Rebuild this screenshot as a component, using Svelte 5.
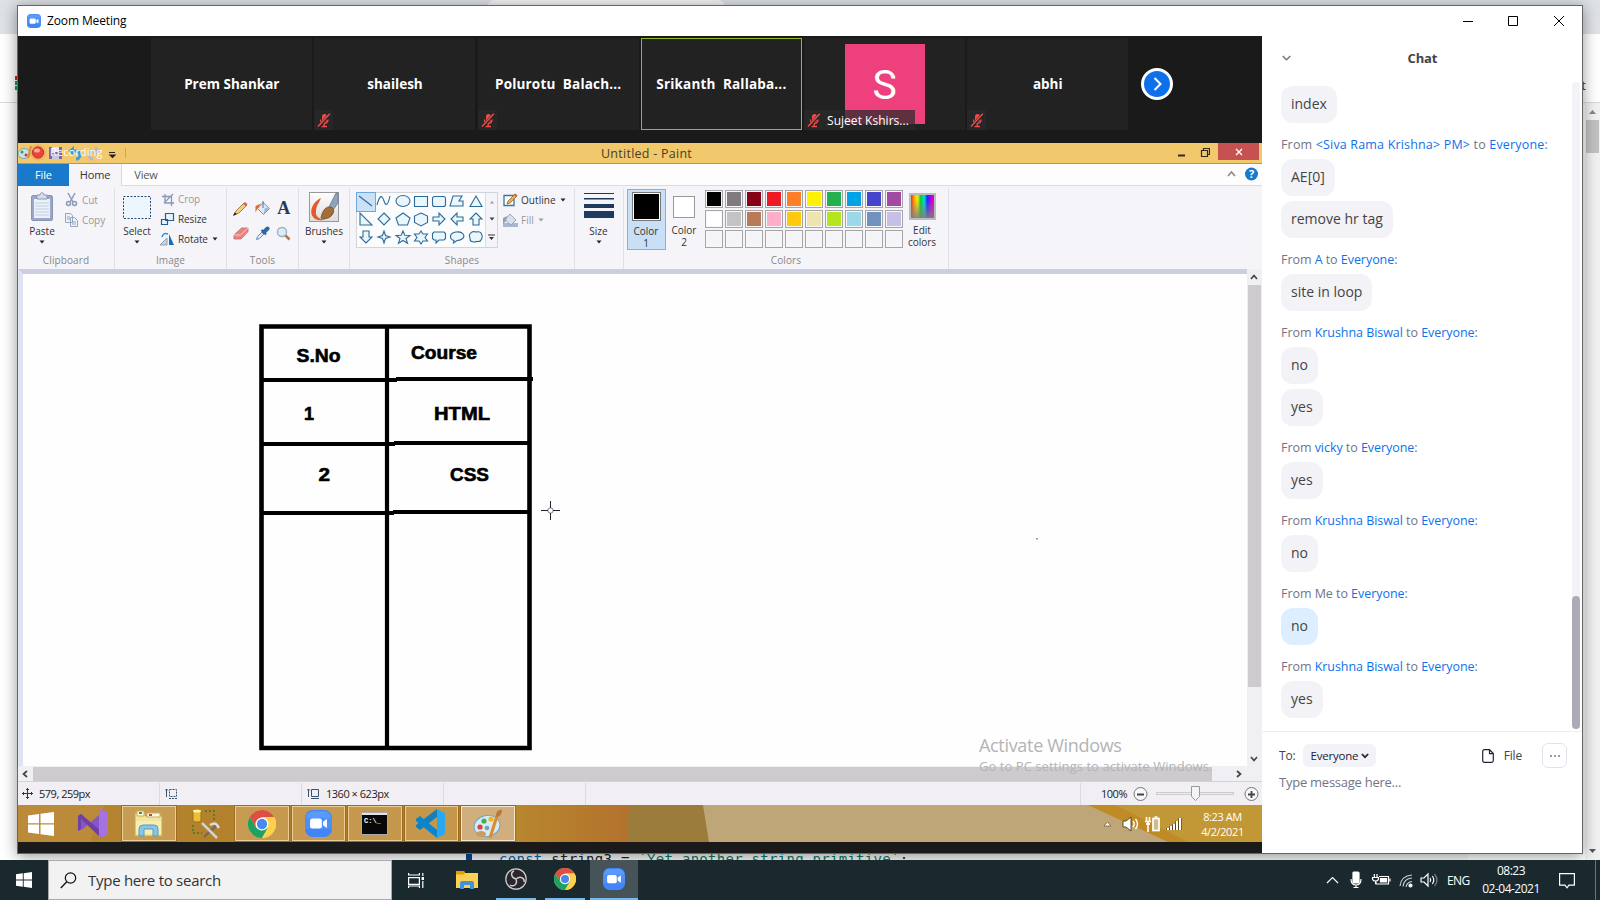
<script>
  const tiles = [
    { name: 'Prem Shankar' },
    { name: 'shailesh', muted: true },
    { name: 'Polurotu  Balach...', muted: true },
    { name: 'Srikanth  Rallaba...', active: true },
    { name: 'Sujeet Kshirs...', avatar: 'S', muted: true },
    { name: 'abhi', muted: true }
  ];
  const chat = [
    { items: ['index'] },
    { from: '<Siva Rama Krishna> PM>', wide: true, items: ['AE[0]', 'remove hr tag'] },
    { from: 'A', items: ['site in loop'] },
    { from: 'Krushna Biswal', items: ['no', 'yes'] },
    { from: 'vicky', items: ['yes'] },
    { from: 'Krushna Biswal', items: ['no'] },
    { from: 'Me', me: true, items: ['no'] },
    { from: 'Krushna Biswal', items: ['yes'] }
  ];
  const palette = [
    '#000000', '#7f7b7f', '#880015', '#ed1c24', '#ff7f27', '#fff200', '#22b14c', '#00a2e8', '#4444cc', '#a349a4',
    '#ffffff', '#c3c3c3', '#b97a57', '#ffaec9', '#ffc90e', '#efe4b0', '#b5e61d', '#99d9ea', '#7092be', '#c8bfe7',
    ...Array(10).fill('#f5f4f9')
  ];
  const shapes = [
    'M2 3L15 13', 'M2 12C5 1 7 2 9 8S13 12 15 3', 'M2 8a7 5.5 0 1 0 14 0a7 5.5 0 1 0-14 0z', 'M2.500 3.500h13v10h-13z',
    'M4.500 3.500h9a2 2 0 0 1 2 2v6a2 2 0 0 1-2 2h-9a2 2 0 0 1-2-2v-6a2 2 0 0 1 2-2z', 'M5 3h9l-3 5h4v5H2z', 'M9 3l6 10.500H3z',
    'M3 2v12h12z', 'M9 2l6 6-6 6-6-6z', 'M9 2l7 5-2.500 7h-9L2 7z', 'M9 2l6.500 3v6.500L9 15l-6.500-3.500V5z', 'M3 6h6V2l6 6-6 6v-4H3z', 'M15 6H9V2L3 8l6 6v-4h6z', 'M6 14V8H3l6-6 6 6h-3v6z',
    'M6 2v6H3l6 6 6-6h-3V2z', 'M9 2l1.500 4.500L15 8l-4.500 1.500L9 14l-1.500-4.500L3 8l4.500-1.500z', 'M9 2l1.800 4.300L16 6.500l-4 3 1.500 4.700L9 11.500l-4.500 2.700L6 9.500l-4-3 5.200-.2z', 'M9 2l2 3h4.500L13 8.500l2.500 3.500H11l-2 3-2-3H2.500L5 8.500 2.500 5H7z',
    'M4 3h10l1.500 1.500v5L14 11H9l-3 3v-3H4L2.500 9.500v-5z', 'M6 11.500C1 10 1 4 8 3s10 4 6 7c-2 1.500-4 1.500-5 1.500L5.500 14z', 'M5 3c2-1 3 0 4 0s4-1 5 1 2 3 1 5-1 4-4 3.500-2 1-4 .5S3 13 3 10 2 8 2.500 6 3 4 5 3z'
  ];
</script>

{#snippet zoomIcon(s)}
  <svg width={s} height={s} viewBox="0 0 24 24"><rect width="24" height="24" rx="7" fill="#4285f8" /><rect x="1" y="1" width="22" height="11" rx="6" fill="#5a9afa" /><rect x="0" y="7" width="24" height="10" fill="#4d8ef9" /><rect x="4.500" y="7.500" width="10.500" height="9" rx="2" fill="#fff" /><path d="M16 10.500l3.500-2.500v8L16 13.500z" fill="#fff" /></svg>
{/snippet}
{#snippet chromeIcon(s)}
  <svg width={s} height={s} viewBox="0 0 24 24"><circle cx="12" cy="12" r="12" fill="#f9cd48" /><path d="M1.600 6A12 12 0 0 1 22.400 6H12L6.800 15z" fill="#dd4f43" /><path d="M1.600 6A12 12 0 0 0 12 24l5.200-9H6.800z" fill="#1da261" /><path d="M22.400 6A12 12 0 0 1 12 24l5.200-9A6 6 0 0 0 12 6z" fill="#ffd04b" /><circle cx="12" cy="12" r="5.600" fill="#fff" /><circle cx="12" cy="12" r="4.400" fill="#4b87ee" /></svg>
{/snippet}
{#snippet winLogo(w, h)}
  <svg width={w} height={h} viewBox="0 0 16 16" preserveAspectRatio="none"><path d="M0 2.300L6.800 1.300V7.500H0zM7.700 1.200L16 0v7.500H7.700zM0 8.400h6.800v6.300L0 13.700zM7.700 8.400H16V16l-8.300-1.200z" fill="#fff" /></svg>
{/snippet}
{#snippet mute()}
  <span class="mute"><svg width="14" height="15" viewBox="0 0 14 15"><rect x="5" y="1" width="5" height="8" rx="2.500" fill="#ef4b4b" /><path d="M3.500 6.500c0 5 7.500 5 7.500 0M7.200 10.500V13M4.500 13.500h5.500" stroke="#ef4b4b" stroke-width="1.400" fill="none" /><path d="M1.500 14L12.800 1" stroke="#242424" stroke-width="3" /><path d="M1 13.500L12.800 .8" stroke="#ef4b4b" stroke-width="1.500" /></svg></span>
{/snippet}
{#snippet caret(c)}
  <svg class="caret" width="6" height="4" viewBox="0 0 6 4"><path d="M.5 .5h5L3 3.500z" fill={c} /></svg>
{/snippet}
{#snippet brushSvg(s)}
  <svg width={s} height={s} viewBox="0 0 30 30"><ellipse cx="14" cy="17" rx="13" ry="10.500" fill="#d5eaf5" stroke="#6da5c4" transform="rotate(-12 14 17)" /><ellipse cx="8" cy="25" rx="5" ry="3" fill="#c99d5d" /><circle cx="7" cy="18" r="2.600" fill="#dc4038" /><circle cx="11" cy="12" r="2.600" fill="#45ad4e" /><circle cx="18" cy="10" r="2.600" fill="#efb51d" /><circle cx="14" cy="19" r="2.300" fill="#819ca9" /><path d="M17 29l7-22" stroke="#e28a30" stroke-width="3.200" /><path d="M23 8c-1-5 3-8 6-7 0 3-1 7-6 7z" fill="#b97842" /></svg>
{/snippet}

<div class="desktop">
  <div class="browser">
    <div class="tabs"><div class="tab"></div></div>
    <div class="toolbar"><span class="menu"><i></i><i></i><i></i></span><span class="tletter">t</span></div>
    <div class="page">
      <div class="code"><span class="kw">const</span> <span>string3</span> = <span class="str">`Yet another string primitive`</span>;</div>
      <div class="pscroll">
        <svg width="7" height="4"><path d="M0 4L3.500 0L7 4z" fill="#858585" /></svg>
        <div class="pthumb"></div>
        <svg width="7" height="4"><path d="M0 0L3.500 4L7 0z" fill="#555" /></svg>
      </div>
    </div>
  </div>

  <div class="window">
    <header class="wtitle">
      {@render zoomIcon(14)}<span>Zoom Meeting</span>
      <svg class="wbtn" width="110" height="12" viewBox="0 0 110 12" fill="none" stroke="#000" stroke-width="1"><path d="M0 6.500h10M45.500 1.500h9v9h-9zM91 1l10 10M101 1l-10 10" /></svg>
    </header>
    <div class="wbody">
      <div class="meeting">
        <div class="strip">
          {#each tiles as t}
            <div class="tile" class:active={t.active}>
              {#if t.avatar}
                <div class="avatar">{t.avatar}</div>
                <div class="tag">{@render mute()}<span>{t.name}</span></div>
              {:else}
                <b>{t.name}</b>
                {#if t.muted}<div class="tag">{@render mute()}</div>{/if}
              {/if}
            </div>
          {/each}
          <svg class="next" width="32" height="32" viewBox="0 0 32 32"><circle cx="16" cy="16" r="14.500" fill="#0e71eb" stroke="#fff" stroke-width="3" /><path d="M13.500 10l6 6-6 6" fill="none" stroke="#fff" stroke-width="2" /></svg>
        </div>

        <div class="paint">
          <div class="ptitle">
            <svg class="qat" width="112" height="20" viewBox="0 0 112 20">
              <ellipse cx="6" cy="10.500" rx="6" ry="5" fill="#c9e2e6" stroke="#78a9b1" /><circle cx="4" cy="9" r="1.500" fill="#3b9a57" /><circle cx="8" cy="12" r="1.500" fill="#c34" /><path d="M10 15l3-12" stroke="#df8b31" stroke-width="2" />
              <circle cx="20" cy="9.500" r="8" fill="#f4a45c" opacity=".6" /><circle cx="20" cy="9.500" r="5.600" fill="#e8463a" stroke="#bf3325" /><ellipse cx="19" cy="7.500" rx="3" ry="2" fill="#ffaa98" />
              <rect x="31" y="4" width="13" height="12" fill="#7964af" /><rect x="34" y="4" width="7" height="5" fill="#e8e4f5" /><rect x="34" y="11" width="7" height="5" fill="#cbc5df" />
              <path d="M53 8h5a4 4 0 0 1 0 8" stroke="#36a0dc" stroke-width="3" fill="none" /><path d="M56 3l-6 5 6 5z" fill="#36a0dc" /><path d="M79 8h-4a4 4 0 0 0 0 8" stroke="#b8bac3" stroke-width="3" fill="none" /><path d="M77 3l6 5-6 5z" fill="#b8bac3" />
              <path d="M91 9.500h6M92 12h5l-2.500 2.500z" stroke="#222" fill="#222" stroke-width="1.200" /><path d="M107.500 5v10" stroke="#c3a76a" />
            </svg>
            <span class="rec">Recording</span>
            <span class="doc">Untitled - Paint</span>
            <svg class="pmin" width="32" height="12" viewBox="0 0 32 12" fill="none" stroke="#322b1b"><path d="M0 8.500h7" stroke-width="2" /><path d="M23.500 3.500h6v6h-6zM25.500 3.500v-2h6v6h-2" stroke-width="1.200" /></svg>
            <span class="pclose"><svg width="8" height="8"><path d="M1 1l6 6M7 1L1 7" stroke="#fff" stroke-width="1.400" /></svg></span>
          </div>
          <div class="ptabs">
            <span class="file">File</span><span class="home">Home</span><span class="view">View</span>
            <svg class="help" width="32" height="14" viewBox="0 0 32 14"><path d="M1 9l3.500-4L8 9" fill="none" stroke="#888" stroke-width="1.500" /><circle cx="24.500" cy="7" r="6.500" fill="#1979ca" /><text x="24.500" y="11" text-anchor="middle" fill="#fff" font-size="11" font-weight="bold">?</text></svg>
          </div>

          <div class="ribbon">
            <section class="g clip">
              <div class="gb">
                <div class="big" style:width="48px">
                  <svg width="24" height="30" viewBox="0 0 24 30"><rect x="1.500" y="3.500" width="21" height="25" rx="1.500" fill="#9aa8c8" stroke="#8796b5" /><rect x="4" y="7" width="16" height="19" fill="#edf2fa" /><path d="M5 11h14M5 14h14M5 17h14M5 20h14M5 23h14" stroke="#c0cce1" /><path d="M7 3h3c0-3 4-3 4 0h3v4H7z" fill="#d7deeb" stroke="#8796b5" /></svg>
                  <span>Paste</span>{@render caret('#222')}
                </div>
                <div class="rows gray">
                  <div><svg width="15" height="15" viewBox="0 0 15 15" fill="none" stroke="#8d9ab6" stroke-width="1.500"><path d="M4 1l5 9M11 1L6 10" /><circle cx="4.500" cy="11.500" r="2" /><circle cx="10.500" cy="11.500" r="2" /></svg>Cut</div>
                  <div><svg width="15" height="15" viewBox="0 0 15 15" fill="#edf1f8" stroke="#97a5bf"><path d="M1.500 1.500h5l2 2v7h-7zM6.500 5.500h4l3 3v6h-7zM3 5h3M3 7h3M8 10h4M8 12h4" /></svg>Copy</div>
                </div>
              </div><h6>Clipboard</h6>
            </section>
            <section class="g img">
              <div class="gb">
                <div class="big" style:width="44px">
                  <svg width="28" height="30"><rect x=".5" y="4.500" width="27" height="22" fill="#eef6fd" stroke="#254a73" stroke-dasharray="2 1.500" /></svg>
                  <span>Select</span>{@render caret('#222')}
                </div>
                <div class="rows">
                  <div class="gray"><svg width="15" height="15" viewBox="0 0 15 15" fill="none" stroke="#8998b4" stroke-width="1.300"><path d="M5 2v9h9M2 4.500h9.500V14M4 11l9-9" /></svg>Crop</div>
                  <div><svg width="15" height="15" viewBox="0 0 15 15" fill="#e7f3fc" stroke="#25608c" stroke-width="1.200"><path d="M5.500 1.500h8v7h-8zM1.500 7.500h6v5h-6z" /></svg>Resize</div>
                  <div><svg width="15" height="15" viewBox="0 0 15 15"><path d="M7 14H0L7 7z" fill="#c5d1df" stroke="#8fa1b7" /><path d="M9 14V3l5 11z" fill="#1a70b5" /><path d="M2 6c1-4 4-4 6-3" fill="none" stroke="#3490cf" stroke-width="1.500" /></svg>Rotate{@render caret('#222')}</div>
                </div>
              </div><h6>Image</h6>
            </section>
            <section class="g tools">
              <div class="toolgrid">
                <svg width="15" height="15" viewBox="0 0 15 15"><path d="M1 14l2-4 8-8 3 2-8 8z" fill="#f3d07c" stroke="#946b34" stroke-width=".8" /><path d="M10 3l2-2 2.500 2-2 2z" fill="#dd6061" /><path d="M0 15l1.500-3.500L4 13z" fill="#222" /></svg>
                <svg width="17" height="16" viewBox="0 0 17 16"><path d="M9 2.500l6.500 6L9.500 14.500 3.500 8.500z" fill="#dfeaf4" stroke="#7893ad" /><path d="M1.500 12.500V6l5.500-2.500-3.500 5z" fill="#e4682a" /><path d="M9 1v7" stroke="#537391" /><path d="M9.500 14l5.500-5.500-4-1z" fill="#9fb9d3" /></svg>
                <b class="ta">A</b>
                <svg width="16" height="15" viewBox="0 0 16 15"><path d="M1 9l7.500-7H15v3.500L8 13H1z" fill="#e88583" stroke="#bb6b6d" stroke-width=".8" /><path d="M1 9h6.500L15 2" fill="none" stroke="#ffc8c5" /></svg>
                <svg width="15" height="15" viewBox="0 0 15 15"><path d="M1.500 13.500l1-3 5-5 2 2-5 5z" fill="#d5ebfa" stroke="#5f90b8" /><path d="M6.500 4l4.500 4.500" stroke="#254f80" stroke-width="2" /><path d="M9 6l3.500-3.500" stroke="#2b69ab" stroke-width="4" stroke-linecap="round" /></svg>
                <svg width="15" height="15" viewBox="0 0 15 15"><path d="M9 9l4.500 4.500" stroke="#b2764b" stroke-width="2.500" /><circle cx="6" cy="6" r="4.500" fill="#dcecf8" stroke="#9eafc1" stroke-width="1.400" /></svg>
              </div><h6>Tools</h6>
            </section>
            <section class="g brushes">
              <div class="big">
                <svg width="30" height="30" viewBox="0 0 30 30"><defs><linearGradient id="bg" x1="0" y1="0" x2="0" y2="1"><stop offset="0" stop-color="#fff" /><stop offset="1" stop-color="#dcdcdf" /></linearGradient></defs><rect x=".5" y=".5" width="29" height="29" fill="url(#bg)" stroke="#999" /><path d="M12 6C3 10 0 20 4 25c3 4 9 4 13 2-7 1-11-3-10-8 0-5 3-8 5-13z" fill="#e2592b" /><path d="M20 15L27 1h2v10l-5 7z" fill="#8fa4bd" stroke="#5f7791" stroke-width=".8" /><path d="M12 26c1-6 4-11 8-11 5 0 6 4 3 8-3 4-7 4-11 3z" fill="#a46e35" stroke="#70491f" stroke-width=".8" /></svg>
                <span>Brushes</span>{@render caret('#222')}
              </div>
            </section>
            <section class="g shp">
              <div class="gb">
                <div class="shapebox">
                  <div class="shapegrid">{#each shapes as d, i}<span class:sel={i === 0}><svg width="18" height="17" viewBox="0 0 18 17"><path {d} fill={i < 2 ? 'none' : '#e9f6fd'} stroke="#2f6a97" stroke-width="1.100" /></svg></span>{/each}</div>
                  <div class="shapescroll"><svg width="6" height="4"><path d="M1 3.500L3 1l2 2.500z" fill="#999" /></svg>{@render caret('#444')}<svg width="7" height="7"><path d="M0 1h7" stroke="#333" /><path d="M1 3h5L3.500 6z" fill="#333" /></svg></div>
                </div>
                <div class="rows two">
                  <div><svg width="15" height="14" viewBox="0 0 15 14"><path d="M1 2.500h10v10H1z" fill="#fff" stroke="#3a76a5" stroke-width="1.300" /><path d="M4 11l1-3 7-7 2 2-7 7z" fill="#e8b34c" stroke="#8c6633" stroke-width=".8" /><path d="M11 2l1.500-1.500 2 2L13 4z" fill="#d55" /></svg>Outline{@render caret('#222')}</div>
                  <div class="gray"><svg width="15" height="14" viewBox="0 0 15 14"><path d="M0 10h15v4H0z" fill="#aab6cd" /><path d="M7 1l6 6-5 5-6-5z" fill="#d9e0ed" stroke="#9aa8c4" /><path d="M0 11V5l4-2-1 5z" fill="#8e9fbe" /></svg>Fill{@render caret('#999')}</div>
                </div>
              </div><h6>Shapes</h6>
            </section>
            <section class="g size">
              <div class="big"><svg width="30" height="30"><rect y="1" width="30" height="1" fill="#1f3a5f" /><rect y="6" width="30" height="1.500" fill="#1f3a5f" /><rect y="12" width="30" height="4" fill="#1f3a5f" /><rect y="19" width="30" height="7" fill="#1f3a5f" /></svg><span>Size</span>{@render caret('#222')}</div>
            </section>
            <section class="g cols">
              <div class="gb">
                <div class="c1"><i></i><span>Color</span><span>1</span></div>
                <div class="c2"><i></i><span>Color</span><span>2</span></div>
                <div class="pal">{#each palette as c}<i style:background={c}></i>{/each}</div>
                <div class="edit"><i></i><span>Edit</span><span>colors</span></div>
              </div><h6>Colors</h6>
            </section>
          </div>

          <div class="work">
            <svg class="canvas" width="1225" height="493" viewBox="22 274 1225 493">
              <g fill="none" stroke="#000">
                <path d="M261.500 326.500H529.500V748H261.500z" stroke-width="4.600" />
                <path d="M387 327V748" stroke-width="4.200" />
                <path d="M262 380H397M396 379H533M262 444H395M394 443H530M262 513H394M393 512H530" stroke-width="4" />
              </g>
              <g class="ctext">
                <text x="296.500" y="362" textLength="44" lengthAdjust="spacingAndGlyphs">S.No</text><text x="411" y="359" textLength="66" lengthAdjust="spacingAndGlyphs">Course</text>
                <text x="304" y="420">1</text><text x="434" y="420" textLength="56" lengthAdjust="spacingAndGlyphs">HTML</text>
                <text x="318.500" y="481" textLength="11.500" lengthAdjust="spacingAndGlyphs">2</text><text x="450" y="481" textLength="39" lengthAdjust="spacingAndGlyphs">CSS</text>
              </g>
              <g stroke="#223" fill="none" stroke-width="1"><circle cx="550.500" cy="510.500" r="2.700" stroke="#777" /><path d="M541 510.500h7M553 510.500h7M550.500 501v7M550.500 513v7" /></g>
              <rect x="1036" y="538" width="2" height="1.500" fill="#999" />
            </svg>
            <div class="vs"><svg width="8" height="6"><path d="M1 5l3-3.500L7 5" fill="none" stroke="#444" stroke-width="1.700" /></svg><i></i><svg width="8" height="6"><path d="M1 1l3 3.500L7 1" fill="none" stroke="#444" stroke-width="1.700" /></svg></div>
            <div class="activate"><p>Activate Windows</p><small>Go to PC settings to activate Windows.</small></div>
          </div>
          <div class="hs"><svg width="6" height="8"><path d="M5 1L1.500 4L5 7" fill="none" stroke="#444" stroke-width="1.700" /></svg><i></i><svg width="6" height="8"><path d="M1 1l3.500 3L1 7" fill="none" stroke="#444" stroke-width="1.700" /></svg></div>
          <div class="status">
            <div class="s1"><svg width="11" height="11" viewBox="0 0 11 11" stroke="#223b5c" fill="none"><path d="M0 5.500h11M5.500 0v11M4 1.500h3M4 9.500h3M1.500 4v3M9.500 4v3" /></svg><span>579, 259px</span></div>
            <div class="s2"><svg width="13" height="12" viewBox="0 0 13 12" fill="none" stroke="#3a536f"><path d="M1.500 1v8M0 2.500L1.500 1 3 2.500" /><path d="M4.500 1.500h7v7h-7z" stroke-dasharray="2 1" /><path d="M4 10.500h8" stroke-dasharray="2 1" /></svg></div>
            <div class="s3"><svg width="13" height="12" viewBox="0 0 13 12" fill="none" stroke="#3a536f"><path d="M1.500 1v8M0 2.500L1.500 1 3 2.500M4.500 1.500h7v7h-7zM4 10.500h8" /></svg><span>1360 × 623px</span></div>
            <div class="s4"></div><div class="s5"></div>
            <div class="s6"><span>100%</span><svg width="126" height="18" viewBox="0 0 126 18"><circle cx="7.500" cy="9" r="6.500" fill="#f7f7f7" stroke="#777" /><path d="M4 9.500h7" stroke="#444" stroke-width="2" /><rect x="23.500" y="7.500" width="77" height="2" fill="#eee" stroke="#ccc" /><path d="M58.500 1.500h8v10l-4 4-4-4z" fill="#f4f4f4" stroke="#999" /><circle cx="118.500" cy="9" r="6.500" fill="#f7f7f7" stroke="#777" /><path d="M115 9.500h7M118.500 6v7" stroke="#444" stroke-width="1.800" /></svg></div>
          </div>
        </div>

        <div class="rtask">
          <svg class="wall" width="1244" height="37" viewBox="18 805 1244 37" preserveAspectRatio="none"><defs><linearGradient id="w1"><stop offset="0" stop-color="#b8872d" /><stop offset="1" stop-color="#b3722d" /></linearGradient><linearGradient id="w0"><stop offset="0" stop-color="#b68632" /><stop offset="1" stop-color="#b07b24" /></linearGradient></defs><rect x="18" y="805" width="500" height="37" fill="url(#w0)" /><path d="M18 805h86l-14 37H18z" fill="#bb8b3a" /><rect x="514" y="805" width="115" height="37" fill="url(#w1)" /><path d="M629 805h80v37h-82z" fill="#9b7c3b" /><path d="M703 805h400l110 37H709z" fill="#bfa678" /><path d="M1088 805h174v37h-90z" fill="#c29736" /><path d="M1088 805h28l72 37h-20z" fill="#c08a25" /></svg>
          <div class="rbtns">
            <span class="n" style:width="45px">{@render winLogo(26, 24)}</span>
            <span class="n" style:width="59px"><svg width="30" height="29" viewBox="0 0 30 29"><path d="M0 7l3-2 19 19V5L5 20l-5 2z" fill="#8855c6" /><path d="M0 7l3-2 20 17v7L3 10v10l-3 2z" fill="#7040a6" /><path d="M21 0l9 3v23l-9 3z" fill="#a671e0" /></svg></span>
            <span class="on"><svg width="29" height="28" viewBox="0 0 29 28"><path d="M1 3h10v3h17v20H1z" fill="#f4e49b" stroke="#c7a94f" /><path d="M3 1h7v5H3zM13 3h13v4H13z" fill="#fff9dd" stroke="#bfae74" /><path d="M5 3h3" stroke="#2aa12a" stroke-width="2" /><path d="M15 5h3" stroke="#d43a2d" stroke-width="2" /><path d="M2 11h25v13H2z" fill="#f8edb2" /><path d="M5 26v-7q0-4 4-4h11q4 0 4 4v7h-5v-7h-9v7z" fill="#89c5e5" stroke="#519dc8" /></svg></span>
            <span class="n" style:width="56.5px"><svg width="30" height="30" viewBox="0 0 30 30"><rect x="1" y="1" width="8" height="12" rx="2" fill="#edbe35" stroke="#94731d" /><ellipse cx="5" cy="2" rx="4" ry="1.500" fill="#fff0a5" /><path d="M13 2h9v9M1 16v8h9" stroke="#3c7b28" stroke-width="1.500" stroke-dasharray="2 2" fill="none" /><path d="M12 28L26 15" stroke="#756d61" stroke-width="2.500" /><path d="M10 14l15 15" stroke="#d1d2d0" stroke-width="2.500" /><path d="M18 16q5-3 7 0l2 3" stroke="#ddd" stroke-width="2.500" fill="none" /></svg></span>
            <span class="on">{@render chromeIcon(28)}</span>
            <span class="on">{@render zoomIcon(27)}</span>
            <span class="on"><svg width="27" height="23" viewBox="0 0 27 23"><rect width="27" height="23" fill="#aaa" /><rect x="1" y="1" width="25" height="2" fill="#e3e3e3" /><rect x="1" y="3" width="25" height="19" fill="#080808" /><text x="3" y="11" font-family="Liberation Mono" font-weight="bold" font-size="7" fill="#fff">C:\_</text></svg></span>
            <span class="on"><svg width="30" height="29" viewBox="0 0 30 29"><path d="M21 0l8 4v21l-8 4z" fill="#29a8ef" /><path d="M21 0v8L4 21l-4-3v-2z" fill="#137fbd" /><path d="M21 29v-8L4 7 0 10v2z" fill="#0787cf" /></svg></span>
            <span class="on cur">{@render brushSvg(30)}</span>
          </div>
          <div class="rtray">
            <svg width="80" height="18" viewBox="0 0 80 18"><path d="M1 11L4.500 7L8 11z" fill="#fff" stroke="#6e5220" stroke-width=".7" /><path d="M20 6h3l5-4v14l-5-4h-3z" fill="#fff" stroke="#5b4a20" /><path d="M30 6q2.500 3 0 6M32.500 4q4 5 0 10" fill="none" stroke="#fff" stroke-width="1.400" /><path d="M43.500 2v4M46.500 2v4M42 6.500h6M45 7v10" stroke="#fff" stroke-width="1.600" fill="none" /><path d="M43 8h4v2h-4z" fill="#fff" /><rect x="50" y="3.500" width="6" height="12" fill="#cfba8b" stroke="#fff" stroke-width="1.700" /><path d="M51.500 2h3" stroke="#fff" stroke-width="1.500" /><path d="M65 15v-2M68 15v-4M71 15V9M74 15V6M77 15V3" stroke="#56441d" stroke-width="3.300" /><path d="M65 15v-2M68 15v-4M71 15V9M74 15V6M77 15V3" stroke="#fff" stroke-width="2" /></svg>
            <div><span>8:23 AM</span><span>4/2/2021</span></div>
          </div>
        </div>
      </div>

      <aside class="chat">
        <div class="chead"><svg width="9" height="6"><path d="M.7 1l3.800 3.800L8.300 1" fill="none" stroke="#747487" stroke-width="1.500" /></svg><b>Chat</b></div>
        <div class="clist">
          {#each chat as c}
            {#if c.from}<p class:wide={c.wide}>From {#if c.me}Me{:else}<em>{c.from}</em>{/if} to <em>Everyone</em>:</p>{/if}
            {#each c.items as m}<div class="bub" class:mine={c.me}>{m}</div>{/each}
          {/each}
          <div class="cscroll"><i></i></div>
        </div>
        <div class="cfoot">
          <div class="to"><span>To:</span><span class="pill">Everyone <svg width="8" height="6"><path d="M.8 1l3.200 3.200L7.200 1" fill="none" stroke="#232333" stroke-width="1.700" /></svg></span>
            <svg class="ficon" width="12" height="14" viewBox="0 0 12 14"><path d="M2.500 .7h5L11.300 4.500v7q0 1.800-1.800 1.800h-7Q.7 13.300.7 11.500v-9Q.7.7 2.500.7zM7.500.7v4h3.800" fill="none" stroke="#232333" stroke-width="1.200" /></svg><span>File</span><span class="more"><i></i><i></i><i></i></span></div>
          <div class="inp">Type message here...</div>
        </div>
      </aside>
    </div>
  </div>

  <footer class="bar">
    <span class="start">{@render winLogo(16, 16)}</span>
    <div class="search"><svg width="17" height="17" viewBox="0 0 17 17"><circle cx="10.500" cy="6" r="5.200" fill="none" stroke="#111" stroke-width="1.200" /><path d="M6.800 9.800L.8 16" stroke="#111" stroke-width="1.300" /></svg><span>Type here to search</span></div>
    <span class="app"><svg width="16" height="15" viewBox="0 0 16 15" fill="none" stroke="#fff" stroke-width="1.200"><path d="M.6 4.600h10.800v6.800H.6zM.6 0v2h10.800V0M.6 15v-2h10.800v2M14.800 0v3M14.800 8v7" /><path d="M14.800 4v3" stroke-width="2.500" /></svg></span>
    <span class="app fold"><svg width="22" height="18" viewBox="0 0 22 18"><path d="M0 0h8l1 2h13v15H0z" fill="#fbd155" /><path d="M0 0h8l1 2-1 1.500H0z" fill="#e2a000" /><path d="M4 18v-6q0-2 2-2h10q2 0 2 2v6h-4v-4H8v4z" fill="#4294d8" /></svg></span>
    <span class="app run"><svg width="22" height="22" viewBox="0 0 22 22"><circle cx="11" cy="11" r="10.200" fill="#29272c" stroke="#d0d0d0" stroke-width="1.200" /><path d="M11 11C5 9 6 4 9 3M11 11c5-4 9 0 8 3M11 11c2 6-3 8-6 6" fill="none" stroke="#ccc" stroke-width="1.500" /></svg></span>
    <span class="app run">{@render chromeIcon(22)}</span>
    <span class="app run cur">{@render zoomIcon(22)}</span>
    <svg class="tray" width="112" height="18" viewBox="0 0 112 18" fill="none" stroke="#fff" stroke-width="1.200">
      <path d="M1 12l5.500-5.500L12 12" /><rect x="27" y="1" width="6" height="11" rx="1" fill="#fff" /><path d="M25 8q0 6 5 6t5-6M30 14v3M27.500 16.500h5" />
      <path d="M54.500 7.500h6v3.500h-6z" fill="#fff" /><path d="M53 5.500h9.500V13H50v-2M64 7.500v3M48.300 3v3M51 3v3M46.500 6.500h6v1q0 2.500-3 2.500t-3-2.500zM49.600 10v3" />
      <path d="M74 15q1-10 12-11M77 15.500q1-8 9-8.500M80 16q1-5 6-5.500" stroke="#c9cfd1" /><circle cx="84.500" cy="14.500" r="1.500" fill="#fff" />
      <path d="M95 7h3l4-4v12l-4-4h-3zM104 7q1.500 2 0 4M106.300 5q3 4 0 8" /><path d="M108.500 3q5 6 0 12" stroke="#777f82" />
    </svg>
    <span class="eng">ENG</span>
    <div class="clock"><span>08:23</span><span>02-04-2021</span></div>
    <svg width="16" height="17" viewBox="0 0 16 17"><path d="M.6 1.600h14.800v11.500H10L8 15.800 6 13.100H.6z" fill="none" stroke="#fff" stroke-width="1.200" /></svg>
    <i class="peek"></i>
  </footer>
</div>

<style>
  :global(body) { margin: 0; overflow: hidden; }
  .desktop, .desktop :global(*) { box-sizing: border-box; }
  .desktop { position: relative; width: 1600px; height: 900px; overflow: hidden; display: flex; flex-direction: column; font-family: 'Open Sans', 'Noto Sans', sans-serif; }
  svg { display: block; flex: none; }
  .browser { height: 860px; display: flex; flex-direction: column; }
  .tabs { height: 34px; background: #dee1e6; padding-left: 487px; }
  .tab { width: 238px; height: 34px; background: #f5f5f6; border-radius: 8px 8px 0 0; }
  .toolbar { height: 69px; background: #fff; border-bottom: 1px solid #d8dae0; display: flex; justify-content: space-between; padding: 42px 13px 0 15px; }
  .menu { display: flex; flex-direction: column; gap: 1px; }
  .menu i { width: 10px; height: 4px; background: #0f9d58; }
  .menu i:first-child { background: #d21; }
  .tletter { font-size: 13px; margin-right: 1px; color: #245; }
  .page { flex: 1; display: flex; justify-content: space-between; align-items: stretch; background: #fff; }
  .code { align-self: flex-end; width: 1002px; height: 17px; margin-left: 466px; padding-left: 27px; border-left: 6px solid #004a96; background: #f6f6f6; font: 14px/32px 'DejaVu Sans Mono', monospace; letter-spacing: .28px; color: #222; white-space: pre; }
  .kw { color: #0069b5; }
  .str { color: #087f62; }
  .pscroll { width: 15px; background: #f1f1f1; display: flex; flex-direction: column; align-items: center; padding: 7px 0; }
  .pthumb { width: 13px; height: 33px; margin: 6px 0 auto; background: #c1c1c1; }

  .window { position: absolute; left: 17px; top: 5px; width: 1566px; height: 849px; border: 1px solid #666; background: #fff; display: flex; flex-direction: column; box-shadow: 0 2px 14px rgba(0, 0, 0, .42); }
  .wtitle { height: 30px; display: flex; align-items: center; padding: 0 0 1px 9px; gap: 6px; font-size: 12px; letter-spacing: -.13px; color: #000; }
  .wbtn { margin-left: auto; margin-right: 9px; }
  .wbody { flex: 1; display: flex; min-height: 0; }
  .meeting { width: 1244px; background: #1a1a1a; display: flex; flex-direction: column; }
  .strip { height: 107px; display: flex; gap: 2.2px; padding: 2px 0 0 133.300px; }
  .tile { position: relative; width: 161px; height: 92px; background: #222; color: #fff; display: flex; align-items: center; justify-content: center; font-size: 13.500px; white-space: pre; }
  .tile:nth-child(3) b, .tile.active b { letter-spacing: .18px; }
  .tile.active { border: 1px solid #8bbf26; }
  .avatar { width: 80px; height: 80px; background: #ee407c; font: 41px/82px Roboto, sans-serif; text-align: center; }
  .tag { position: absolute; left: 0; bottom: 0; height: 20px; display: flex; align-items: center; background: rgba(42, 42, 42, .72); font-size: 12px; padding-right: 6px; letter-spacing: .03px; }
  .tag:has(.mute:last-child) { padding: 0; }
  .mute { width: 19px; padding-left: 1px; display: flex; justify-content: center; }
  .tag span:last-child:not(.mute) { padding-left: 4px; }
  .next { margin: 30px 0 0 10.500px; }

  .paint { height: 662px; display: flex; flex-direction: column; background: #f5f4f9; font-size: 10px; color: #333; }
  .ptitle { position: relative; height: 21px; background: #f1c86c; border-bottom: 1px solid #b5985a; display: flex; }
  .rec { position: absolute; left: 32px; top: 1px; color: #fff; font-size: 11px; letter-spacing: .1px; }
  .doc { margin-left: 471px; padding-top: 2px; font-size: 12.500px; line-height: 17px; letter-spacing: .26px; color: #483d26; }
  .pmin { margin: 4px 8px 0 auto; }
  .pclose { width: 41px; height: 17px; margin-right: 3px; background: #c75050; display: grid; place-items: center; }
  .ptabs { height: 22px; display: flex; background: #fdfdfe; border-bottom: 1px solid #dadbe0; line-height: 22px; font-size: 11px; letter-spacing: -.15px; }
  .ptabs span { text-align: center; height: 22px; }
  .file { width: 51px; background: #1979ca; color: #fff; }
  .home { width: 53px; background: #f5f4f9; border-right: 1px solid #dadbe0; }
  .view { width: 48px; color: #555; }
  .help { margin: 3px 3px 0 auto; font-family: 'Open Sans', sans-serif; }
  .ribbon { height: 83px; display: flex; padding-top: 2px; }
  .g { height: 81px; border-right: 1px solid #e0e0e6; display: flex; flex-direction: column; }
  .gb { display: flex; flex: 1; }
  h6 { margin: auto 0 2px; font-weight: 400; font-size: 10px; line-height: 14px; color: #888; text-align: center; letter-spacing: .1px; }
  .clip { width: 97px; } .img { width: 112px; } .tools { width: 72px; } .brushes { width: 51px; } .shp { width: 225px; } .size { width: 49px; padding-right: 1px; } .cols { width: 325px; }
  .big { display: flex; flex-direction: column; align-items: center; padding-top: 4px; line-height: 14px; }
  .big span { margin: 2px 0 2px; }
  .rows { display: flex; flex-direction: column; padding-top: 1.500px; letter-spacing: -.1px; }
  .rows > div { height: 20px; display: flex; align-items: center; gap: 3px; white-space: pre; }
  .img .rows > div { height: 19.700px; }
  .clip .rows { margin-left: -2px; }
  .img .rows { margin-left: 1px; }
  .rows .caret { margin-left: 1px; }
  .gray { color: #999; }
  .toolgrid { display: grid; grid-template-columns: repeat(3, 21.500px); grid-template-rows: 25px 25px; padding: 7.500px 0 0 3px; place-items: center; }
  .ta { font: bold 18px/20px 'Liberation Serif', serif; color: #243a5c; }
  .shapebox { width: 142px; height: 56px; margin: 4px 0 0 6px; border: 1px solid #d3d4da; background: #fbfcfe; display: flex; }
  .shapegrid { width: 129px; display: grid; grid-template-columns: repeat(7, 18.300px); grid-template-rows: repeat(3, 18px); border-right: 1px solid #dcdde2; }
  .shapegrid .sel { background: #cbe1f8; outline: 1px solid #6da9dd; }
  .shapescroll { flex: 1; display: flex; flex-direction: column; align-items: center; justify-content: space-around; background: #f5f4f9; }
  .two { margin-left: 5px; letter-spacing: .05px; }
  .c1, .c2, .edit { display: flex; flex-direction: column; align-items: center; line-height: 12px; }
  .c1 { width: 39px; height: 61px; margin: 1px 0 0 2.500px; padding-top: 2px; background: #c9dff5; border: 1px solid #84b2dc; }
  .c1 i { width: 29px; height: 29px; background: #000; border: 1px solid #777; outline: 1px solid #fff; outline-offset: -2px; margin-bottom: 4px; }
  .c2 { width: 37px; padding-top: 8px; }
  .c2 i { width: 22px; height: 22px; border: 1px solid #999; background: #fff; margin-bottom: 6px; }
  .pal { display: grid; grid-template-columns: repeat(10, 18px); grid-auto-rows: 18px; gap: 2px; margin: 2px 0 0 2.500px; height: 58px; }
  .pal i { border: 1px solid #a5a5a8; box-shadow: inset 0 0 0 1px #f8f8fa; }
  .edit { width: 38px; padding-top: 5px; }
  .edit i { width: 27px; height: 27px; margin-bottom: 4px; border: 2px solid #bbb; background: linear-gradient(transparent 20%, rgba(128, 128, 128, .9)), linear-gradient(90deg, #f22, #fa0, #ee0, #0c3, #0dd, #22f, #a0f, #f08); }

  .work { position: relative; flex: 1; display: flex; border-top: 5px solid #cad0e2; border-left: 5px solid #e0e4f1; min-height: 0; background: #fefefe; }
  .canvas { margin-left: -1px; }
  .ctext { font: bold 18px 'Liberation Sans', Arial, sans-serif; fill: #000; stroke: #000; stroke-width: .6px; }
  .vs { width: 15px; display: flex; flex-direction: column; align-items: center; background: #f0eff3; padding: 5px 1px 4px 0; margin-top: -5px; }
  .vs i { width: 13px; height: 402px; background: #cdcbce; margin: 5px 0 auto; }
  .activate { position: absolute; left: 956px; top: 458px; color: #b4b4b6; white-space: nowrap; z-index: 1; }
  .activate p { margin: 0; font-size: 18px; line-height: 27px; letter-spacing: -.32px; }
  .activate small { display: block; font-size: 13px; line-height: 15px; letter-spacing: .05px; }
  .hs { height: 15px; display: flex; align-items: center; background: #f0eff3; padding: 0 20px 0 4px; gap: 5px; }
  .hs i { width: 1179px; height: 14px; background: #cdcbce; }
  .hs svg:last-child { margin-left: auto; }
  .status { height: 24px; border-top: 1px solid #d3d2d6; background: #f1eff3; display: flex; align-items: center; font-size: 11px; letter-spacing: -.48px; color: #222; }
  .status > div { flex: none; display: flex; align-items: center; height: 22px; width: 142px; border-right: 1px solid #dcdbdf; padding-left: 4px; gap: 6px; }
  .status .s2, .status .s3 { padding-left: 5px; }
  .status .s5 { width: 495px; }
  .status .s6 { width: 181px; border: 0; padding-left: 20px; }

  .rtask { position: relative; height: 37px; display: flex; justify-content: space-between; }
  .wall { position: absolute; inset: 0; }
  .rbtns { position: relative; display: flex; align-items: center; }
  .rbtns span { display: grid; place-items: center; height: 35px; }
  .rbtns .on { width: 53.500px; margin-right: 3px; background: rgba(255, 230, 190, .25); border: 1px solid rgba(255, 232, 190, .65); box-shadow: 0 0 0 1px rgba(120, 80, 20, .4); }
  .rbtns .cur { background: rgba(240, 225, 215, .5); border-color: #f4e7cb; }
  .rtray { position: relative; display: flex; align-items: center; gap: 13px; padding-right: 14px; color: #fff; font-size: 11px; letter-spacing: -.4px; }
  .rtray svg { margin-right: 1px; }
  .rtray div { width: 51px; text-align: center; display: flex; flex-direction: column; line-height: 15.500px; align-items: center; white-space: nowrap; padding-top: 1px; }

  .chat { flex: 1; display: flex; flex-direction: column; background: #fff; color: #444; }
  .chead { height: 50px; display: flex; align-items: center; padding: 0 0 6px 19.500px; font-size: 13px; }
  .chead b { margin-left: 117px; letter-spacing: -.15px; }
  .clist { position: relative; height: 646px; padding-left: 19px; display: flex; flex-direction: column; align-items: flex-start; border-bottom: 1px solid #ededf4; }
  .clist p { margin: -5px 0 0; height: 36px; padding-top: 4px; line-height: 36px; font-size: 12.500px; letter-spacing: -.05px; color: #747487; white-space: nowrap; }
  .clist p.wide { letter-spacing: .17px; }
  em { font-style: normal; color: #0e71eb; }
  .bub { height: 37px; margin-bottom: 5px; padding: 0 10px; line-height: 35px; border-radius: 12px; background: #f2f2f7; font-size: 14px; color: #444; white-space: nowrap; }
  .bub.mine { background: #dceeff; }
  .cscroll { position: absolute; right: 2px; top: -4px; width: 8px; height: 647px; border-radius: 4px; background: #f2f2f7; display: flex; align-items: flex-end; }
  .cscroll i { width: 8px; height: 133px; border-radius: 4px; background: #acacb8; }
  .cfoot { padding: 11px 15px 0 17px; font-size: 12px; }
  .to { display: flex; align-items: center; letter-spacing: -.2px; }
  .pill { width: 73px; height: 23px; margin-left: 8px; border-radius: 6px; background: #f2f2f7; color: #232333; display: flex; align-items: center; justify-content: center; gap: 3px; font-size: 11.500px; font-weight: 500; }
  .ficon { margin: 0 10px 0 auto; }
  .more { width: 25px; height: 25px; margin-left: 20px; border: 1px solid #e2e2ee; border-radius: 6px; display: flex; align-items: center; justify-content: center; gap: 2px; }
  .more i { width: 2px; height: 2px; background: #9a9aaa; }
  .inp { padding-top: 4px; font-size: 13px; line-height: 20px; color: #747487; letter-spacing: -.25px; }

  .bar { position: relative; height: 40px; background: #1a292e; display: flex; align-items: center; color: #fff; }
  .start { width: 48px; display: grid; place-items: center; }
  .search { width: 344px; height: 40px; background: #f2f2f2; border: 1px solid #aaa; color: #333; display: flex; align-items: center; gap: 11px; padding-left: 11px; font-size: 15px; letter-spacing: -.27px; margin-right: 4px; }
  .app { width: 40px; height: 40px; display: grid; place-items: center; }
  .app.run { width: 40px; margin-right: 9px; margin-left: 0; border-bottom: 2px solid #76b9ed; }
  .fold { width: 62px; margin-right: -2px; }
  .app.cur { width: 48px; margin: 0 0 0 -4px; background: #465358; }
  .tray { margin-left: auto; }
  .eng { margin-left: 9px; font-size: 12px; letter-spacing: -.6px; width: 23px; }
  .clock { width: 60px; margin: 0 18px 0 11px; display: flex; flex-direction: column; align-items: center; font-size: 12px; line-height: 18px; letter-spacing: -.5px; }
  .peek { width: 1px; height: 40px; margin: 0 4px 0 20px; background: #66767b; }
</style>
